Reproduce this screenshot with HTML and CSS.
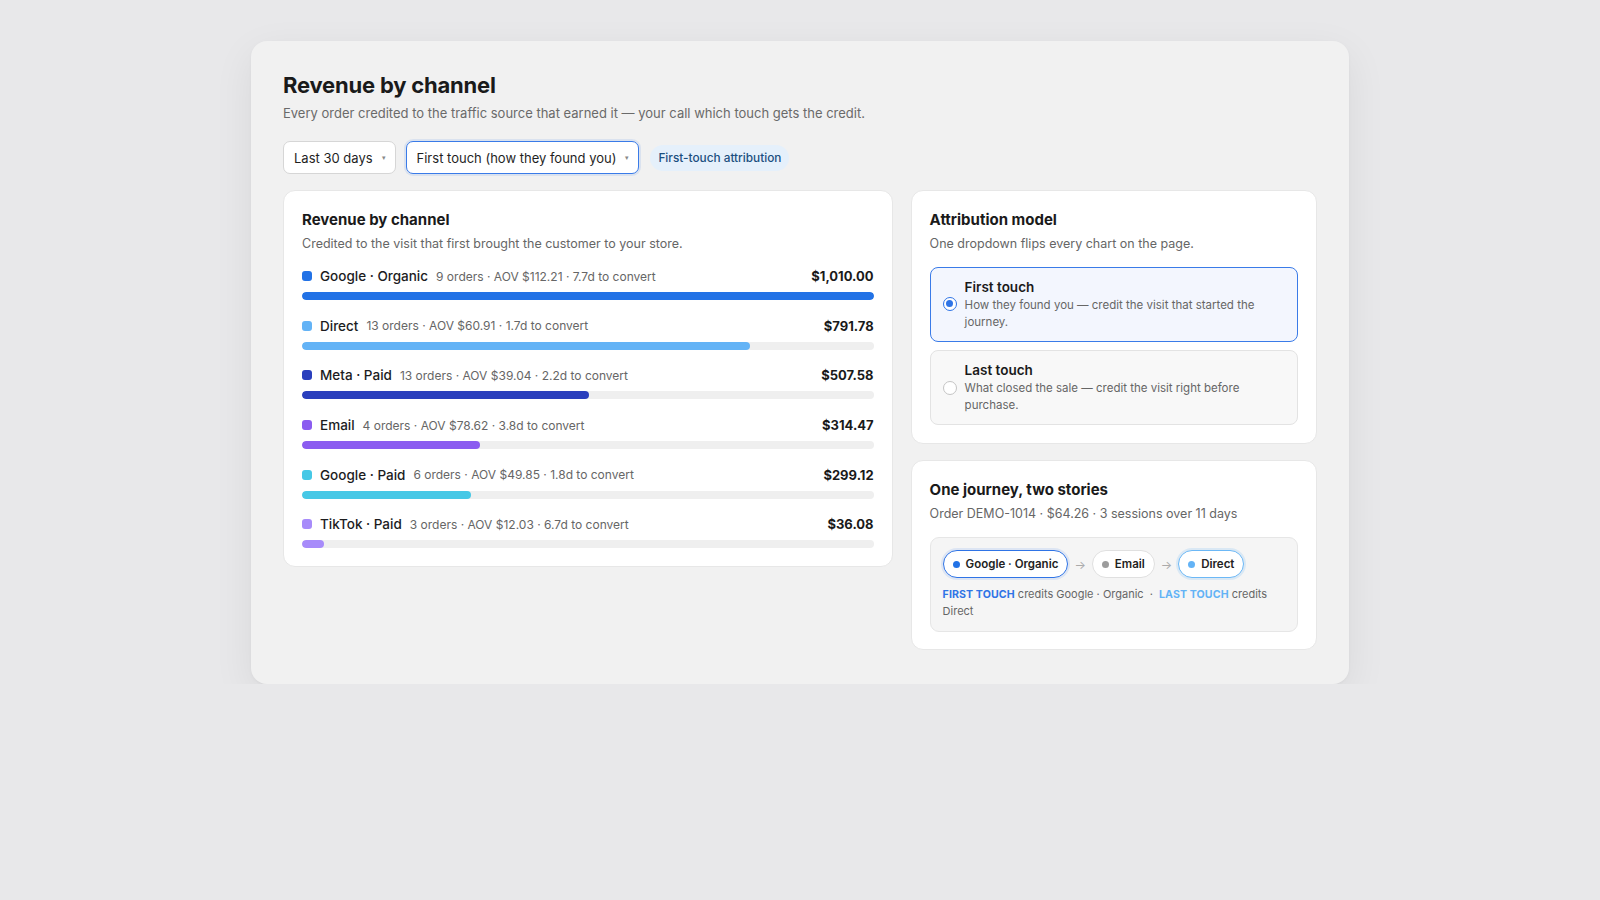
FILE: index.html
```html
<!DOCTYPE html>
<html lang="en">
<head>
<meta charset="utf-8">
<title>Revenue by channel</title>
<link rel="stylesheet" href="styles.css">
</head>
<body>
<main class="panel">
  <h1 class="page-title">Revenue by channel</h1>
  <p class="page-sub">Every order credited to the traffic source that earned it — your call which touch gets the credit.</p>

  <div class="controls">
    <div class="select"><span>Last 30 days</span><span class="caret">▾</span></div>
    <div class="select select-active"><span>First touch (how they found you)</span><span class="caret">▾</span></div>
    <span class="badge">First-touch attribution</span>
  </div>

  <div class="grid">
    <section class="card">
      <h2 class="card-title">Revenue by channel</h2>
      <p class="card-sub">Credited to the visit that first brought the customer to your store.</p>
      <div class="rows">
        <div class="row">
          <div class="row-head">
            <span class="dot c-go"></span>
            <span class="label">Google · Organic</span>
            <span class="meta">9 orders · AOV $112.21 · 7.7d to convert</span>
            <span class="amount">$1,010.00</span>
          </div>
          <div class="track"><div class="fill c-go" style="width:100%"></div></div>
        </div>
        <div class="row">
          <div class="row-head">
            <span class="dot c-di"></span>
            <span class="label">Direct</span>
            <span class="meta">13 orders · AOV $60.91 · 1.7d to convert</span>
            <span class="amount">$791.78</span>
          </div>
          <div class="track"><div class="fill c-di" style="width:78.39%"></div></div>
        </div>
        <div class="row">
          <div class="row-head">
            <span class="dot c-me"></span>
            <span class="label">Meta · Paid</span>
            <span class="meta">13 orders · AOV $39.04 · 2.2d to convert</span>
            <span class="amount">$507.58</span>
          </div>
          <div class="track"><div class="fill c-me" style="width:50.26%"></div></div>
        </div>
        <div class="row">
          <div class="row-head">
            <span class="dot c-em"></span>
            <span class="label">Email</span>
            <span class="meta">4 orders · AOV $78.62 · 3.8d to convert</span>
            <span class="amount">$314.47</span>
          </div>
          <div class="track"><div class="fill c-em" style="width:31.14%"></div></div>
        </div>
        <div class="row">
          <div class="row-head">
            <span class="dot c-gp"></span>
            <span class="label">Google · Paid</span>
            <span class="meta">6 orders · AOV $49.85 · 1.8d to convert</span>
            <span class="amount">$299.12</span>
          </div>
          <div class="track"><div class="fill c-gp" style="width:29.62%"></div></div>
        </div>
        <div class="row">
          <div class="row-head">
            <span class="dot c-tt"></span>
            <span class="label">TikTok · Paid</span>
            <span class="meta">3 orders · AOV $12.03 · 6.7d to convert</span>
            <span class="amount">$36.08</span>
          </div>
          <div class="track"><div class="fill c-tt" style="width:3.9%"></div></div>
        </div>
      </div>
    </section>

    <div class="side">
      <section class="card">
        <h2 class="card-title">Attribution model</h2>
        <p class="card-sub">One dropdown flips every chart on the page.</p>
        <div class="options">
          <div class="option option-on">
            <span class="radio radio-on"></span>
            <div class="option-text">
              <div class="option-title">First touch</div>
              <div class="option-desc">How they found you — credit the visit that started the journey.</div>
            </div>
          </div>
          <div class="option">
            <span class="radio"></span>
            <div class="option-text">
              <div class="option-title">Last touch</div>
              <div class="option-desc">What closed the sale — credit the visit right before purchase.</div>
            </div>
          </div>
        </div>
      </section>

      <section class="card card-journey">
        <h2 class="card-title">One journey, two stories</h2>
        <p class="card-sub">Order DEMO-1014 · $64.26 · 3 sessions over 11 days</p>
        <div class="journey">
          <div class="chips">
            <span class="chip chip-first"><span class="cdot c-go"></span>Google · Organic</span>
            <span class="arrow">→</span>
            <span class="chip"><span class="cdot c-grey"></span>Email</span>
            <span class="arrow">→</span>
            <span class="chip chip-last"><span class="cdot c-di"></span>Direct</span>
          </div>
          <p class="journey-note"><span class="tag-first">FIRST TOUCH</span> <span>credits Google · Organic</span> <span class="sep">·</span> <span class="tag-last">LAST TOUCH</span> <span>credits</span> <span>Direct</span></p>
        </div>
      </section>
    </div>
  </div>
</main>
</body>
</html>
```

FILE: styles.css
```css
* { box-sizing: border-box; }

html, body {
  margin: 0;
  padding: 0;
}

body {
  background: #e8e8ea;
  font-family: Inter, "Noto Sans", "Liberation Sans", sans-serif;
  color: #1c1c1e;
  padding-top: 41px;
}

.panel {
  width: 1098px;
  margin: 0 auto;
  background: #f1f1f1;
  border-radius: 16px;
  padding: 30px 32px 34px;
  box-shadow: 0 12px 40px rgba(0, 0, 0, 0.07), 0 1px 3px rgba(0, 0, 0, 0.04);
}

.page-title {
  margin: 0;
  font-size: 22px;
  line-height: 28px;
  font-weight: 700;
  letter-spacing: -0.2px;
  color: #1a1a1a;
}

.page-sub {
  margin: 4px 0 0;
  font-size: 13px;
  line-height: 20px;
  color: #6a6a6a;
}

.controls {
  display: flex;
  align-items: center;
  gap: 10px;
  margin-top: 18px;
}

.select {
  height: 33px;
  display: flex;
  align-items: center;
  gap: 9px;
  padding: 0 9px 0 10px;
  background: #fff;
  border: 1px solid #d6d6d6;
  border-radius: 7px;
  font-size: 13px;
  color: #1f1f1f;
}

.select-active {
  border-color: #3a7be8;
  box-shadow: 0 0 0 2px rgba(58, 123, 232, 0.12);
}

.caret {
  font-size: 7px;
  color: #888;
}

.badge {
  margin-left: 1px;
  padding: 5px 8px;
  background: #e5f0fb;
  color: #1b4f80;
  border-radius: 999px;
  font-size: 11.8px;
  font-weight: 500;
  line-height: 16px;
}

.grid {
  display: grid;
  grid-template-columns: 3fr 2fr;
  gap: 18px;
  margin-top: 16px;
  align-items: start;
}

.side {
  display: flex;
  flex-direction: column;
  gap: 16px;
}

.card {
  background: #fff;
  border: 1px solid #e7e7e7;
  border-radius: 12px;
  padding: 19px 18px 18px;
}

.card-journey {
  padding-bottom: 17px;
}

.card-title {
  margin: 0;
  font-size: 15px;
  line-height: 20px;
  font-weight: 700;
  color: #1a1a1a;
}

.card-sub {
  margin: 5px 0 0;
  font-size: 12.5px;
  line-height: 18px;
  color: #666;
}

.rows {
  margin-top: 13px;
  display: flex;
  flex-direction: column;
  gap: 15.7px;
}

.row-head {
  display: flex;
  align-items: center;
  height: 20px;
}

.dot {
  width: 10px;
  height: 10px;
  border-radius: 3px;
  flex: none;
  margin-right: 8px;
}

.label {
  font-size: 13.5px;
  font-weight: 500;
  color: #1c1c1e;
  margin-right: 8px;
  white-space: nowrap;
}

.meta {
  font-size: 12px;
  color: #666;
  white-space: nowrap;
}

.amount {
  margin-left: auto;
  font-size: 13px;
  font-weight: 700;
  color: #1a1a1a;
}

.track {
  margin-top: 6px;
  height: 8px;
  border-radius: 999px;
  background: #efefef;
  overflow: hidden;
}

.fill {
  height: 100%;
  border-radius: 999px;
}

.c-go { background: #2272e6; }
.c-di { background: #63b3f6; }
.c-me { background: #2a3fbd; }
.c-em { background: #8b5cf0; }
.c-gp { background: #46c8e6; }
.c-tt { background: #a78bfa; }
.c-grey { background: #9c9c9c; }

.options {
  margin-top: 13.5px;
  display: flex;
  flex-direction: column;
  gap: 8.5px;
}

.option {
  display: flex;
  align-items: center;
  gap: 8px;
  padding: 10px 12px;
  border: 1px solid #e3e3e3;
  border-radius: 8px;
  background: #f8f8f8;
}

.option-on {
  border-color: #3a7be8;
  background: #f3f6fe;
}

.radio {
  flex: none;
  width: 14px;
  height: 14px;
  border-radius: 50%;
  border: 1.5px solid #c4c4c4;
  background: #fff;
  position: relative;
}

.radio-on {
  border-color: #2f74e6;
}

.radio-on::after {
  content: "";
  position: absolute;
  left: 2px;
  top: 2px;
  width: 7px;
  height: 7px;
  border-radius: 50%;
  background: #2f74e6;
}

.option-title {
  font-size: 13.5px;
  line-height: 18px;
  font-weight: 600;
  color: #1a1a1a;
}

.option-desc {
  margin-top: 1px;
  font-size: 11.5px;
  line-height: 17px;
  color: #666;
}

.journey {
  margin-top: 14px;
  background: #f5f5f5;
  border: 1px solid #e6e6e6;
  border-radius: 9px;
  padding: 12px 12px 12px;
}

.chips {
  display: flex;
  align-items: center;
  gap: 6px;
}

.chip {
  height: 28px;
  display: inline-flex;
  align-items: center;
  gap: 6px;
  padding: 0 9px;
  background: #fff;
  border: 1px solid #e0e0e0;
  border-radius: 999px;
  font-size: 11.5px;
  font-weight: 600;
  color: #222;
  white-space: nowrap;
}

.chip-first {
  border: 1.5px solid #2f74e6;
  box-shadow: 0 0 0 2px rgba(47, 116, 230, 0.12);
}

.chip-last {
  border: 1.5px solid #6cb8f6;
  box-shadow: 0 0 0 2px rgba(99, 179, 246, 0.18);
}

.cdot {
  width: 7px;
  height: 7px;
  border-radius: 50%;
  flex: none;
}

.arrow {
  font-size: 12px;
  color: #aaa;
}

.journey-note {
  margin: 8px 0 0;
  font-size: 11px;
  line-height: 16px;
  color: #666;
}

.sep {
  margin: 0 3px;
}

.tag-first,
.tag-last {
  font-size: 10.6px;
  font-weight: 700;
  letter-spacing: 0.1px;
}

.tag-first { color: #2f74e6; }
.tag-last { color: #63b3f6; }
```
